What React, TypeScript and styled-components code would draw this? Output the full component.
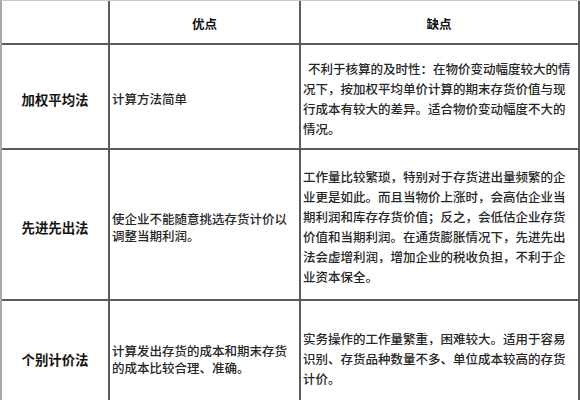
import React from "react";
import styled, { createGlobalStyle } from "styled-components";

const Global = createGlobalStyle`
  html, body {
    margin: 0;
    padding: 0;
    background: #ffffff;
  }
  body {
    font-family: "Noto Sans CJK SC", "Noto Sans", sans-serif;
    color: #222;
  }
`;

const Table = styled.div`
  display: grid;
  grid-template-columns: 108px 191px 279px;
  grid-template-rows: 44px 105px 151px 114px;
  width: 580px;
  border-top: 1px solid #c8c8c8;
  border-left: 2px solid #a8a8a8;
  box-sizing: border-box;
  background: #fff;
`;

const Cell = styled.div<{ $align?: "center" | "left"; $col?: 1 | 2 | 3 }>`
  box-sizing: border-box;
  border-right: 2px solid #5c5c5c;
  border-bottom: 2px solid #5c5c5c;
  display: flex;
  align-items: center;
  justify-content: ${(p) => (p.$align === "center" ? "center" : "flex-start")};
  padding: 4px ${(p) => (p.$col === 3 ? "3px" : "2px")} 0 2px;
  overflow: hidden;
`;

const HeadText = styled.span`
  font-size: 12.5px;
  font-weight: 700;
  color: #111;
  line-height: 16px;
`;

const MethodText = styled.span`
  font-size: 13.4px;
  font-weight: 700;
  color: #141414;
  line-height: 18px;
`;

const ProText = styled.p`
  margin: 0;
  font-size: 12.5px;
  font-weight: 500;
  line-height: 17px;
  color: #262626;
`;

const ConText = styled.p<{ $indent?: boolean }>`
  margin: 0;
  font-size: 12.5px;
  font-weight: 500;
  line-height: 20px;
  color: #262626;
  text-indent: ${(p) => (p.$indent ? "5px" : "0")};
`;

type Row = { name: string; pro: string; con: string; indent?: boolean };

const rows: Row[] = [
  {
    name: "加权平均法",
    pro: "计算方法简单",
    con: "不利于核算的及时性：在物价变动幅度较大的情况下，按加权平均单价计算的期末存货价值与现行成本有较大的差异。适合物价变动幅度不大的情况。",
    indent: true,
  },
  {
    name: "先进先出法",
    pro: "使企业不能随意挑选存货计价以调整当期利润。",
    con: "工作量比较繁琐，特别对于存货进出量频繁的企业更是如此。而且当物价上涨时，会高估企业当期利润和库存存货价值；反之，会低估企业存货价值和当期利润。在通货膨胀情况下，先进先出法会虚增利润，增加企业的税收负担，不利于企业资本保全。",
  },
  {
    name: "个别计价法",
    pro: "计算发出存货的成本和期末存货的成本比较合理、准确。",
    con: "实务操作的工作量繁重，困难较大。适用于容易识别、存货品种数量不多、单位成本较高的存货计价。",
  },
];

export default function App() {
  return (
    <>
      <Global />
      <Table>
        <Cell $align="center" $col={1} />
        <Cell $align="center" $col={2}>
          <HeadText>优点</HeadText>
        </Cell>
        <Cell $align="center" $col={3}>
          <HeadText>缺点</HeadText>
        </Cell>
        {rows.map((r) => (
          <React.Fragment key={r.name}>
            <Cell $align="center" $col={1}>
              <MethodText>{r.name}</MethodText>
            </Cell>
            <Cell $col={2}>
              <ProText>{r.pro}</ProText>
            </Cell>
            <Cell $col={3}>
              <ConText $indent={r.indent}>{r.con}</ConText>
            </Cell>
          </React.Fragment>
        ))}
      </Table>
    </>
  );
}
